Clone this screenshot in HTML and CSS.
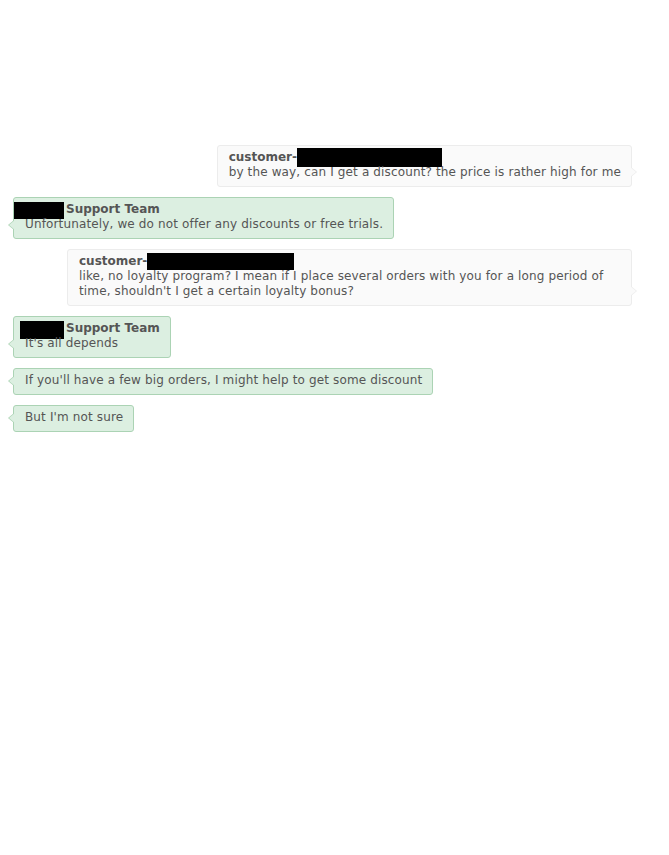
FILE: index.html
```html
<!DOCTYPE html>
<html>
<head>
<meta charset="utf-8">
<link rel="stylesheet" href="styles.css">
</head>
<body>
<div class="chat">
  <div class="row row-right">
    <div class="bubble customer">
      <div class="name">customer-<span class="redact r-c1"></span></div>
      <div class="text">by the way, can I get a discount? the price is rather high for me</div>
    </div>
  </div>
  <div class="row">
    <div class="bubble support">
      <div class="name"><span class="redact r-s1"></span>Support Team</div>
      <div class="text">Unfortunately, we do not offer any discounts or free trials.</div>
    </div>
  </div>
  <div class="row row-right">
    <div class="bubble customer wide">
      <div class="name">customer-<span class="redact r-c2"></span></div>
      <div class="text">like, no loyalty program? I mean if I place several orders with you for a long period of time, shouldn't I get a certain loyalty bonus?</div>
    </div>
  </div>
  <div class="row">
    <div class="bubble support">
      <div class="name"><span class="redact r-s2"></span>Support Team</div>
      <div class="text">It's all depends</div>
    </div>
  </div>
  <div class="row">
    <div class="bubble support">
      <div class="text">If you'll have a few big orders, I might help to get some discount</div>
    </div>
  </div>
  <div class="row">
    <div class="bubble support">
      <div class="text">But I'm not sure</div>
    </div>
  </div>
</div>
</body>
</html>
```

FILE: styles.css
```css
html, body {
  margin: 0;
  padding: 0;
  background: #ffffff;
}

body {
  font-family: "DejaVu Sans", Verdana, sans-serif;
  font-size: 12px;
  color: #555555;
}

.chat {
  display: flex;
  flex-direction: column;
  gap: 10px;
  padding: 145px 37px 0 13px;
}

.row {
  display: flex;
  justify-content: flex-start;
}

.row-right {
  justify-content: flex-end;
}

.bubble {
  position: relative;
  padding: 4px 10px 6px 11px;
  border: 1px solid;
  border-radius: 3px;
  line-height: 15px;
}

.bubble.wide {
  max-width: 542px;
}

.text {
  letter-spacing: 0.14px;
}

.customer {
  background: #fafafa;
  border-color: #ececec;
}

.support {
  background: #dcefe1;
  border-color: #abd3b4;
}

.name {
  font-weight: bold;
  color: #555555;
  white-space: nowrap;
  height: 15px;
}

.redact {
  display: inline-block;
  background: #000000;
  vertical-align: top;
}

.r-c1 {
  width: 145px;
  height: 19px;
  margin-top: -2px;
  margin-bottom: -2px;
}

.r-c2 {
  width: 147px;
  height: 17px;
  margin-top: -1px;
  margin-bottom: -1px;
}

.r-s1 {
  width: 50px;
  height: 17px;
  margin-left: -11px;
  margin-right: 2px;
  margin-bottom: -2px;
}

.r-s2 {
  width: 44px;
  height: 18px;
  margin-left: -5px;
  margin-right: 2px;
  margin-bottom: -3px;
}

.support::before,
.support::after {
  content: "";
  position: absolute;
  bottom: 8px;
  width: 0;
  height: 0;
  border-top: 5px solid transparent;
  border-bottom: 5px solid transparent;
}

.support::before {
  left: -6px;
  border-right: 6px solid #abd3b4;
}

.support::after {
  left: -5px;
  border-right: 6px solid #dcefe1;
}

.customer::before,
.customer::after {
  content: "";
  position: absolute;
  bottom: 9px;
  width: 0;
  height: 0;
  border-top: 5px solid transparent;
  border-bottom: 5px solid transparent;
}

.customer::before {
  right: -6px;
  border-left: 6px solid #ececec;
}

.customer::after {
  right: -5px;
  border-left: 6px solid #fafafa;
}
```
